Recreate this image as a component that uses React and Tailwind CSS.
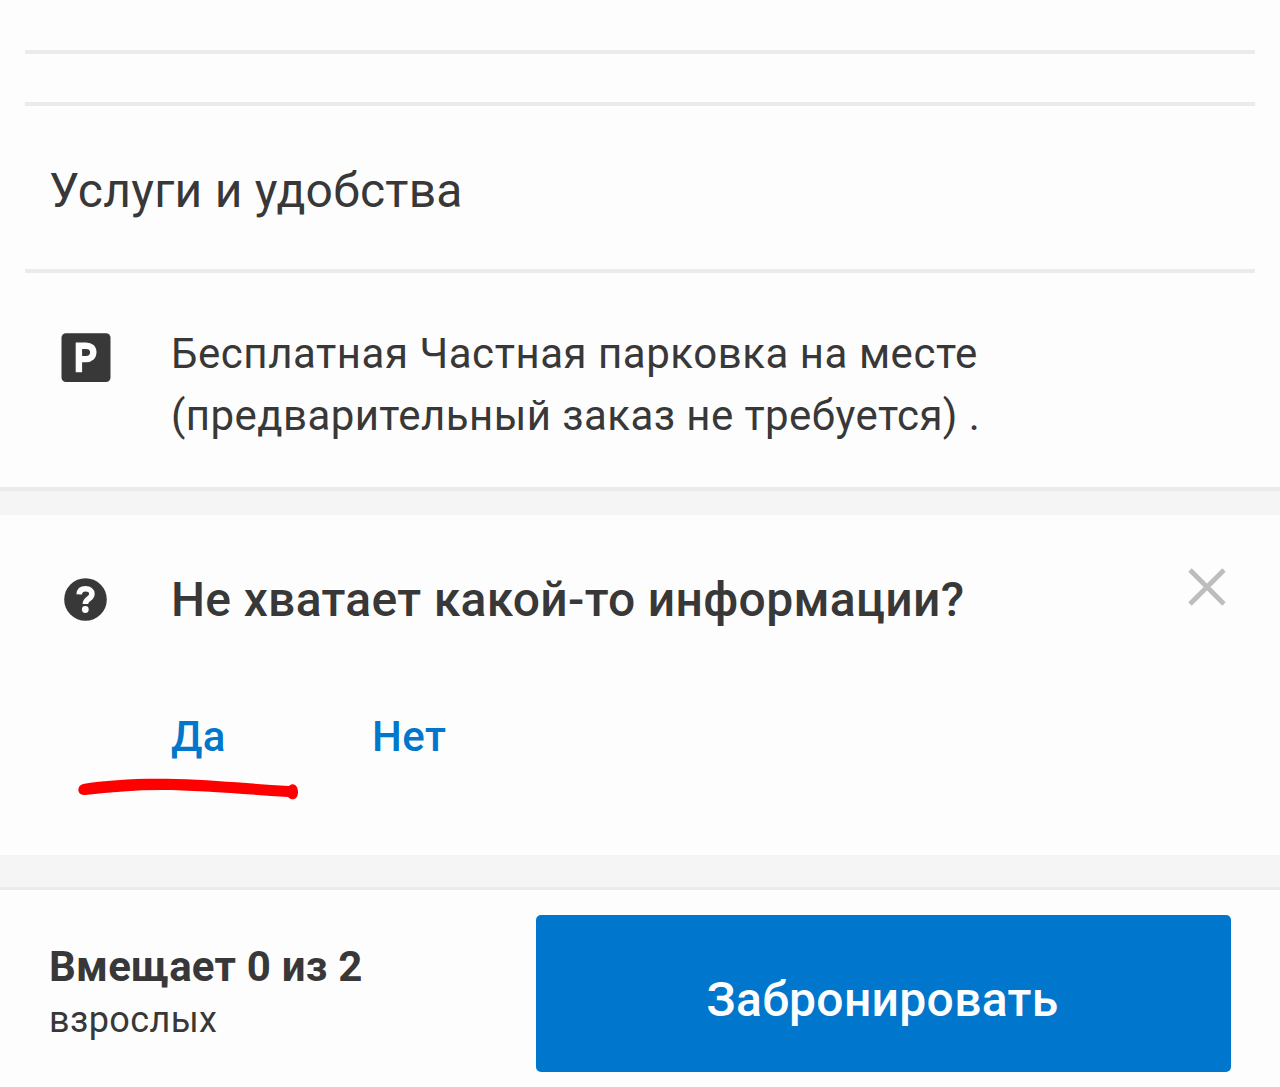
import React from "react";

function ParkingIcon() {
  return (
    <svg className="block h-[49px] w-[50px]" viewBox="0 0 50 49">
      <rect x="0.5" y="0.3" width="49" height="48.7" rx="4.5" fill="#383838" />
      <path
        d="M17.9 39.2V12.7h7.2c4.6 0 7.2 2.4 7.2 6.6s-2.6 6.8-7.2 6.8h-7.2"
        fill="none"
        stroke="#fdfdfd"
        strokeWidth="6.4"
      />
    </svg>
  );
}

function QuestionIcon() {
  return (
    <svg className="block h-[43px] w-[43px]" viewBox="0 0 43 43">
      <circle cx="21.5" cy="21.5" r="21.3" fill="#383838" />
      <path
        d="M15.2 16.3c.2-3.7 2.6-5.6 6.3-5.6 3.9 0 6.4 2 6.4 5.2 0 4.9-6.5 4.8-6.5 10"
        fill="none"
        stroke="#fdfdfd"
        strokeWidth="5.6"
      />
      <circle cx="21.3" cy="31.5" r="3.4" fill="#fdfdfd" />
    </svg>
  );
}

function CloseIcon() {
  return (
    <svg className="block h-[38px] w-[38px]" viewBox="0 0 38 38" fill="none" stroke="#bdbdbd" strokeWidth="4.8">
      <path d="M2 2l34 34M36 2L2 36" />
    </svg>
  );
}

export default function App() {
  return (
    <div className="flex h-[1087px] w-[1280px] flex-col overflow-hidden bg-[#fdfdfd] font-[Roboto,sans-serif] text-[#383838]">
      <section className="h-[487px] px-[25px] pt-[50px]">
        <div className="h-[4px] bg-[#ebebeb]" />
        <div className="mt-[48px] h-[4px] bg-[#ebebeb]" />
        <h2 className="h-[163px] pt-[55px] pl-[24px] text-[48px] leading-[60px] tracking-[0.24px] whitespace-nowrap">
          Услуги и удобства
        </h2>
        <div className="h-[4px] bg-[#ebebeb]" />
        <div className="flex pt-[50px] pl-[36px]">
          <div className="w-[110px] shrink-0 pt-[10px]">
            <ParkingIcon />
          </div>
          <p className="text-[42px] leading-[62px] tracking-[0.54px] whitespace-nowrap">
            Бесплатная Частная парковка на месте
            <br />
            <span className="tracking-[0.43px]">(предварительный заказ не требуется) .</span>
          </p>
        </div>
      </section>

      <div className="h-[28px] border-t-4 border-[#ebebeb] bg-[#f5f5f5]" />

      <section className="h-[340px]">
        <div className="flex pt-[53px] pr-[54px] pl-[64px]">
          <div className="w-[107px] shrink-0 pt-[10px]">
            <QuestionIcon />
          </div>
          <h3 className="grow pt-[2px] text-[48px] leading-[60px] font-medium tracking-[0.32px] whitespace-nowrap">
            Не хватает какой-то информации?
          </h3>
          <button className="self-start">
            <CloseIcon />
          </button>
        </div>
        <div className="relative mt-[77px] flex pl-[171px] text-[42px] leading-[60px] font-medium text-[#0077cc]">
          <button className="w-[201px] text-left tracking-[0.4px]">Да</button>
          <button className="tracking-[0.5px]">Нет</button>
          {/* marker stroke under the first answer */}
          <svg className="absolute top-[70px] left-[76px] h-[26px] w-[226px]" viewBox="0 0 226 26">
            <path
              d="M7 7C30 3 65 1 100 2c40 1 75 5 113 7 4-4 9-1 9 6 0 8-6 9-10 5C165 17 120 13 85 13c-25 0-50 2-76 5-8 1-9-9-2-11z"
              fill="#ff0000"
            />
          </svg>
        </div>
      </section>

      <div className="h-[35px] border-b-[3px] border-[#ebebeb] bg-[#f5f5f5]" />

      <footer className="flex grow justify-between pt-[25px] pr-[49px] pl-[49px]">
        <div className="pt-[25px] whitespace-nowrap">
          <div className="text-[42px] leading-[54px] font-bold tracking-[0.22px]">Вмещает 0 из 2</div>
          <div className="text-[36px] leading-[52px] tracking-[0.4px]">взрослых</div>
        </div>
        <button className="h-[157px] w-[695px] rounded-[5px] bg-[#0077cc] pt-[12px] pr-[2px] text-[48px] font-medium tracking-[0.3px] text-[#fdfdfd]">
          Забронировать
        </button>
      </footer>
    </div>
  );
}
